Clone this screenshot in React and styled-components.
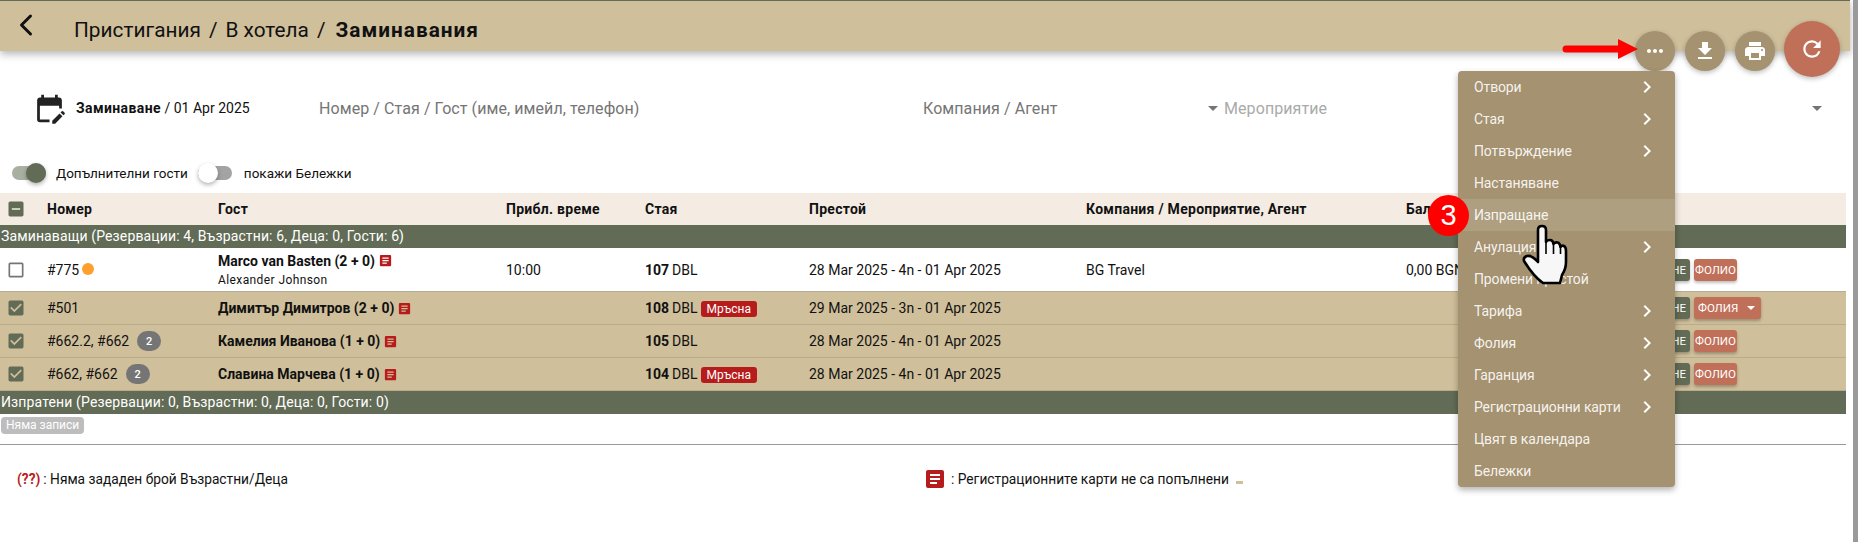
import React from 'react';
import styled, { createGlobalStyle } from 'styled-components';
import { ChevronLeft } from 'lucide-react';
import {
  MdArticle,
  MdCheckBox,
  MdCheckBoxOutlineBlank,
  MdChevronRight,
  MdEditCalendar,
  MdFileDownload,
  MdIndeterminateCheckBox,
  MdMoreHoriz,
  MdPrint,
  MdRefresh
} from 'react-icons/md';

const Global = createGlobalStyle`
  html, body {
    margin: 0;
    height: 542px;
    overflow: hidden;
    background: #fff;
    font-family: Roboto, "Noto Sans", sans-serif;
    font-size: 14px;
    color: #111;
  }
`;

const Shell = styled.div`
  position: relative;
  display: flex;
  height: 542px;
`;
const Main = styled.div`
  width: 1850px;
`;
const ScrollThumb = styled.div`
  width: 5px;
  margin-left: 3px;
  background: #9a9a9a;
`;

const TopBar = styled.header`
  display: flex;
  align-items: center;
  height: 50px;
  border-top: 1px solid #616b55;
  background: #cfbf9b;
  box-shadow: 0 3px 8px rgba(0, 0, 0, 0.3);
`;
const BackIcon = styled(ChevronLeft)`
  flex: none;
  margin: -2px 30px 0 8px;
`;
const Crumbs = styled.div`
  padding-top: 7px;
  font-size: 20.8px;
  b {
    margin-left: 2px;
    letter-spacing: 1px;
  }
`;
const Slash = styled.span`
  margin: 0 8px;
`;

const FilterBar = styled.div`
  display: flex;
  align-items: center;
  height: 64px;
  margin-top: 25px;
`;
const CalendarIcon = styled(MdEditCalendar)`
  flex: none;
  margin-left: 33px;
  font-size: 33px;
  color: #222;
`;
const DateText = styled.div`
  width: 243px;
  margin-left: 10px;
  b {
    font-weight: 700;
    letter-spacing: 0.4px;
  }
`;
const FilterLabel = styled.div`
  width: ${p => p.$width}px;
  flex: none;
  font-size: 16px;
  letter-spacing: 0.08px;
  color: ${p => p.$muted ? '#aaa' : '#757575'};
`;
const Caret = styled.span`
  flex: none;
  width: 0;
  height: 0;
  margin-right: 6px;
  border-left: 5px solid transparent;
  border-right: 5px solid transparent;
  border-top: 5px solid #757575;
`;

const ToggleBar = styled.div`
  display: flex;
  align-items: center;
  height: 26px;
  margin: 20px 0 7px 12px;
`;
const Track = styled.span`
  position: relative;
  flex: none;
  width: 34px;
  height: 14px;
  border-radius: 7px;
  background: ${p => p.$on ? '#a9b0a2' : '#a3a3a3'};
  &::after {
    content: '';
    position: absolute;
    top: -3px;
    left: ${p => p.$on ? '14px' : '0'};
    width: 20px;
    height: 20px;
    border-radius: 50%;
    background: ${p => p.$on ? '#616b55' : '#fff'};
    box-shadow: 0 2px 4px rgba(0, 0, 0, 0.3);
  }
`;
const ToggleLabel = styled.span`
  margin: 0 10px 0 10px;
  font-size: 13.5px;
  &:last-child {
    margin-left: 12px;
  }
`;

const COLUMNS = '47px 171px 288px 139px 164px 277px 320px 194px 1fr';

const Table = styled.div`
  margin-right: 4px;
`;
const HeadRow = styled.div`
  display: grid;
  grid-template-columns: ${COLUMNS};
  align-items: center;
  height: 32px;
  background: #f4ebe2;
  font-weight: 700;
  letter-spacing: 0.27px;
`;
const GroupRow = styled.div`
  height: 23px;
  padding-left: 1px;
  background: #616b55;
  color: #fff;
  font-size: 14px;
  letter-spacing: 0.13px;
  line-height: 23px;
`;
const Row = styled.div`
  display: grid;
  grid-template-columns: ${COLUMNS};
  align-items: center;
  box-sizing: border-box;
  height: ${p => p.$tall ? 44 : 33}px;
  background: ${p => p.$selected ? '#cfbf9b' : '#fff'};
  border-bottom: 1px solid ${p => p.$selected ? '#b9ab8b' : '#b5ac97'};
`;
const CheckCell = styled.div`
  display: flex;
  justify-content: center;
  padding-right: 16px;
  font-size: 20px;
  color: ${p => p.$off ? '#757575' : '#616b55'};
  svg {
    display: block;
  }
`;
const Inline = styled.div`
  display: flex;
  align-items: center;
`;
const Dot = styled.span`
  width: 12px;
  height: 12px;
  margin: 0 0 2px 3px;
  border-radius: 50%;
  background: #ff9f2e;
`;
const CountChip = styled.span`
  display: flex;
  align-items: center;
  justify-content: center;
  width: 24px;
  height: 20px;
  margin-left: 8px;
  border-radius: 10px;
  background: #757575;
  color: #fff;
  font-size: 11px;
  font-weight: 500;
`;
const GuestName = styled.b`
  font-weight: 700;
`;
const NoteIcon = styled(MdArticle)`
  flex: none;
  margin-left: 3px;
  font-size: 15px;
  color: #b71c1c;
`;
const GuestSub = styled.div`
  margin-top: 4px;
  font-size: 12px;
  letter-spacing: 0.4px;
`;
const RoomNo = styled.b`
  font-weight: 700;
  margin-right: 3px;
`;
const DirtyChip = styled.span`
  display: inline-block;
  height: 16px;
  margin-left: 3px;
  padding: 0 6px;
  border-radius: 3px;
  background: #b71c1c;
  color: #fff;
  font-size: 12px;
  line-height: 16px;
`;
const Actions = styled.div`
  display: flex;
  gap: 4px;
`;
const ActionButton = styled.button`
  display: flex;
  align-items: center;
  justify-content: ${p => p.$green ? 'flex-end' : p.$wide ? 'space-between' : 'center'};
  box-sizing: border-box;
  width: ${p => p.$width}px;
  height: 22px;
  padding: 0 4px;
  border: 0;
  border-radius: 3px;
  background: ${p => p.$green ? '#616b55' : '#c07058'};
  box-shadow: 0 2px 3px rgba(0, 0, 0, 0.25);
  color: #fff;
  font-family: Roboto, sans-serif;
  font-size: 11.5px;
  font-weight: 400;
`;
const WhiteCaret = styled.span`
  width: 0;
  height: 0;
  margin-right: 2px;
  border-left: 4px solid transparent;
  border-right: 4px solid transparent;
  border-top: 4px solid #fff;
`;

const EmptyChip = styled.span`
  display: inline-block;
  height: 17px;
  margin: 3px 0 0 1px;
  padding: 0 5px;
  border-radius: 4px;
  background: #bdbdbd;
  color: #fff;
  font-size: 12px;
  line-height: 17px;
`;
const Divider = styled.hr`
  height: 1px;
  margin: 10px 4px 0 0;
  border: 0;
  background: #9a9a9a;
`;
const Legend = styled.div`
  display: grid;
  grid-template-columns: 926px 1fr;
  align-items: center;
  margin-top: 22px;
`;
const LegendItem = styled.div`
  display: flex;
  align-items: center;
  padding-left: ${p => p.$first ? 17 : 0}px;
  font-size: 13.75px;
`;
const Unknown = styled.b`
  color: #b71c1c;
  margin-right: 3px;
`;
const LegendIcon = styled(MdArticle)`
  flex: none;
  margin: 0 4px 0 -3px;
  font-size: 24px;
  color: #b71c1c;
`;
const LegendMark = styled.span`
  width: 7px;
  height: 3px;
  margin: 6px 0 0 7px;
  background: #cfbf9b;
`;

const Fabs = styled.div`
  position: absolute;
  top: 21px;
  left: 1635px;
  display: flex;
  align-items: flex-start;
  gap: 10px;
`;
const Fab = styled.div`
  display: flex;
  align-items: center;
  justify-content: center;
  width: ${p => p.$big ? 56 : 40}px;
  height: ${p => p.$big ? 56 : 40}px;
  margin: ${p => p.$big ? '0 0 0 -1px' : '10px 0 0 0'};
  border-radius: 50%;
  background: ${p => p.$big ? '#c07058' : '#a59270'};
  box-shadow: 0 2px 5px rgba(0, 0, 0, 0.25);
  color: #fff;
  font-size: ${p => p.$big ? 26 : 24}px;
`;
const Menu = styled.div`
  position: absolute;
  top: 71px;
  left: 1458px;
  width: 217px;
  border-radius: 4px;
  background: #a59270;
  box-shadow: 0 3px 6px rgba(0, 0, 0, 0.3);
`;
const MenuItem = styled.div`
  display: flex;
  align-items: center;
  justify-content: space-between;
  box-sizing: border-box;
  height: 32px;
  padding: 0 16px 1px;
  background: ${p => p.$hover ? '#ae9f81' : 'transparent'};
  color: rgba(255, 255, 255, 0.9);
  font-size: 14px;
  letter-spacing: -0.12px;
  svg {
    font-size: 24px;
    color: #fff;
  }
`;
const StepBadge = styled.div`
  position: absolute;
  top: 195px;
  left: 1428px;
  display: flex;
  align-items: center;
  justify-content: center;
  width: 41px;
  height: 41px;
  border-radius: 50%;
  background: #f00;
  color: #fff;
  font-family: "Liberation Sans", sans-serif;
  font-size: 29px;
`;
const Pointer = styled.svg`
  position: absolute;
  top: 215px;
  left: 1510px;
`;
const RedArrow = styled.svg`
  position: absolute;
  top: 38px;
  left: 1560px;
`;

const menuItems = [
  ['Отвори', true], ['Стая', true], ['Потвърждение', true], ['Настаняване'],
  ['Изпращане', false, true], ['Анулация', true], ['Промени престой'],
  ['Тарифа', true], ['Фолия', true], ['Гаранция', true],
  ['Регистрационни карти', true], ['Цвят в календара'], ['Бележки']
];

const guests = [
  { no: '#501', name: 'Димитър Димитров (2 + 0)', room: '108', dirty: true, stay: '29 Mar 2025 - 3n - 01 Apr 2025', many: true },
  { no: '#662.2, #662', count: 2, name: 'Камелия Иванова (1 + 0)', room: '105', stay: '28 Mar 2025 - 4n - 01 Apr 2025' },
  { no: '#662, #662', count: 2, name: 'Славина Марчева (1 + 0)', room: '104', dirty: true, stay: '28 Mar 2025 - 4n - 01 Apr 2025' }
];

const App = () => (
  <Shell>
    <Global />
    <Main>
      <TopBar>
        <BackIcon size={36} strokeWidth={2} />
        <Crumbs>
          <span>Пристигания</span>
          <Slash>/</Slash>
          <span>В хотела</span>
          <Slash>/</Slash>
          <b>Заминавания</b>
        </Crumbs>
      </TopBar>

      <FilterBar>
        <CalendarIcon />
        <DateText><b>Заминаване</b> / 01 Apr 2025</DateText>
        <FilterLabel $width={604}>Номер / Стая / Гост (име, имейл, телефон)</FilterLabel>
        <FilterLabel $width={285}>Компания / Агент</FilterLabel>
        <Caret />
        <FilterLabel $muted $width={588}>Мероприятие</FilterLabel>
        <Caret />
      </FilterBar>

      <ToggleBar>
        <Track $on />
        <ToggleLabel>Допълнителни гости</ToggleLabel>
        <Track />
        <ToggleLabel>покажи Бележки</ToggleLabel>
      </ToggleBar>

      <Table>
        <HeadRow>
          <CheckCell><MdIndeterminateCheckBox /></CheckCell>
          <div>Номер</div>
          <div>Гост</div>
          <div>Прибл. време</div>
          <div>Стая</div>
          <div>Престой</div>
          <div>Компания / Мероприятие, Агент</div>
          <div>Баланс</div>
          <div />
        </HeadRow>
        <GroupRow>Заминаващи (Резервации: 4, Възрастни: 6, Деца: 0, Гости: 6)</GroupRow>
        <Row $tall>
          <CheckCell $off><MdCheckBoxOutlineBlank /></CheckCell>
          <Inline>#775<Dot /></Inline>
          <div>
            <Inline><GuestName>Marco van Basten (2 + 0)</GuestName><NoteIcon /></Inline>
            <GuestSub>Alexander Johnson</GuestSub>
          </div>
          <div>10:00</div>
          <div><RoomNo>107</RoomNo>DBL</div>
          <div>28 Mar 2025 - 4n - 01 Apr 2025</div>
          <div>BG Travel</div>
          <div>0,00 BGN</div>
          <Actions>
            <ActionButton $green $width={90}>ИЗПРАЩАНЕ</ActionButton>
            <ActionButton $width={43}>ФОЛИО</ActionButton>
          </Actions>
        </Row>
        {guests.map(g => (
          <Row $selected key={g.name}>
            <CheckCell><MdCheckBox /></CheckCell>
            <Inline>{g.no}{g.count && <CountChip>{g.count}</CountChip>}</Inline>
            <Inline><GuestName>{g.name}</GuestName><NoteIcon /></Inline>
            <div />
            <div><RoomNo>{g.room}</RoomNo>DBL{g.dirty && <DirtyChip>Мръсна</DirtyChip>}</div>
            <div>{g.stay}</div>
            <div />
            <div />
            <Actions>
              <ActionButton $green $width={90}>ИЗПРАЩАНЕ</ActionButton>
              {g.many
                ? <ActionButton $wide $width={67}>ФОЛИЯ<WhiteCaret /></ActionButton>
                : <ActionButton $width={43}>ФОЛИО</ActionButton>}
            </Actions>
          </Row>
        ))}
        <GroupRow>Изпратени (Резервации: 0, Възрастни: 0, Деца: 0, Гости: 0)</GroupRow>
      </Table>
      <EmptyChip>Няма записи</EmptyChip>
      <Divider />
      <Legend>
        <LegendItem $first><Unknown>(??)</Unknown>: Няма зададен брой Възрастни/Деца</LegendItem>
        <LegendItem><LegendIcon />: Регистрационните карти не са попълнени<LegendMark /></LegendItem>
      </Legend>
    </Main>
    <ScrollThumb />

    <Fabs>
      <Fab><MdMoreHoriz /></Fab>
      <Fab><MdFileDownload /></Fab>
      <Fab><MdPrint /></Fab>
      <Fab $big><MdRefresh /></Fab>
    </Fabs>
    <RedArrow width="80" height="24" viewBox="0 0 80 24">
      <path d="M6 7.500H58V1L78 11L58 21V14.500H6A3.500 3.500 0 0 1 6 7.500Z" fill="#f00" />
    </RedArrow>
    <Menu>
      {menuItems.map(([label, more, hover]) => (
        <MenuItem key={label} $hover={hover}>
          {label}
          {more && <MdChevronRight />}
        </MenuItem>
      ))}
    </Menu>
    <StepBadge>3</StepBadge>
    <Pointer width="80" height="80" viewBox="0 0 80 80">
      <path
        d="M28 42V15Q28 11 32 11Q36 11 36 15V27Q37 25 40 25Q43 25 43.500 29Q45 27 47.500 27.500Q50 28 50.500 32Q52 30 54 31Q56 32 56 36V47Q56 54 52 60L50 68H33Q24 62 14 46Q13 42 17 41Q22 40 28 47Z"
        fill="#f7f7f7"
        stroke="#000"
        strokeWidth="2.600"
        strokeLinejoin="round"
      />
      <path d="M36 27V39M43.500 29V39M50.500 32V39" stroke="#000" strokeWidth="1.600" fill="none" />
    </Pointer>
  </Shell>
);

export default App;
